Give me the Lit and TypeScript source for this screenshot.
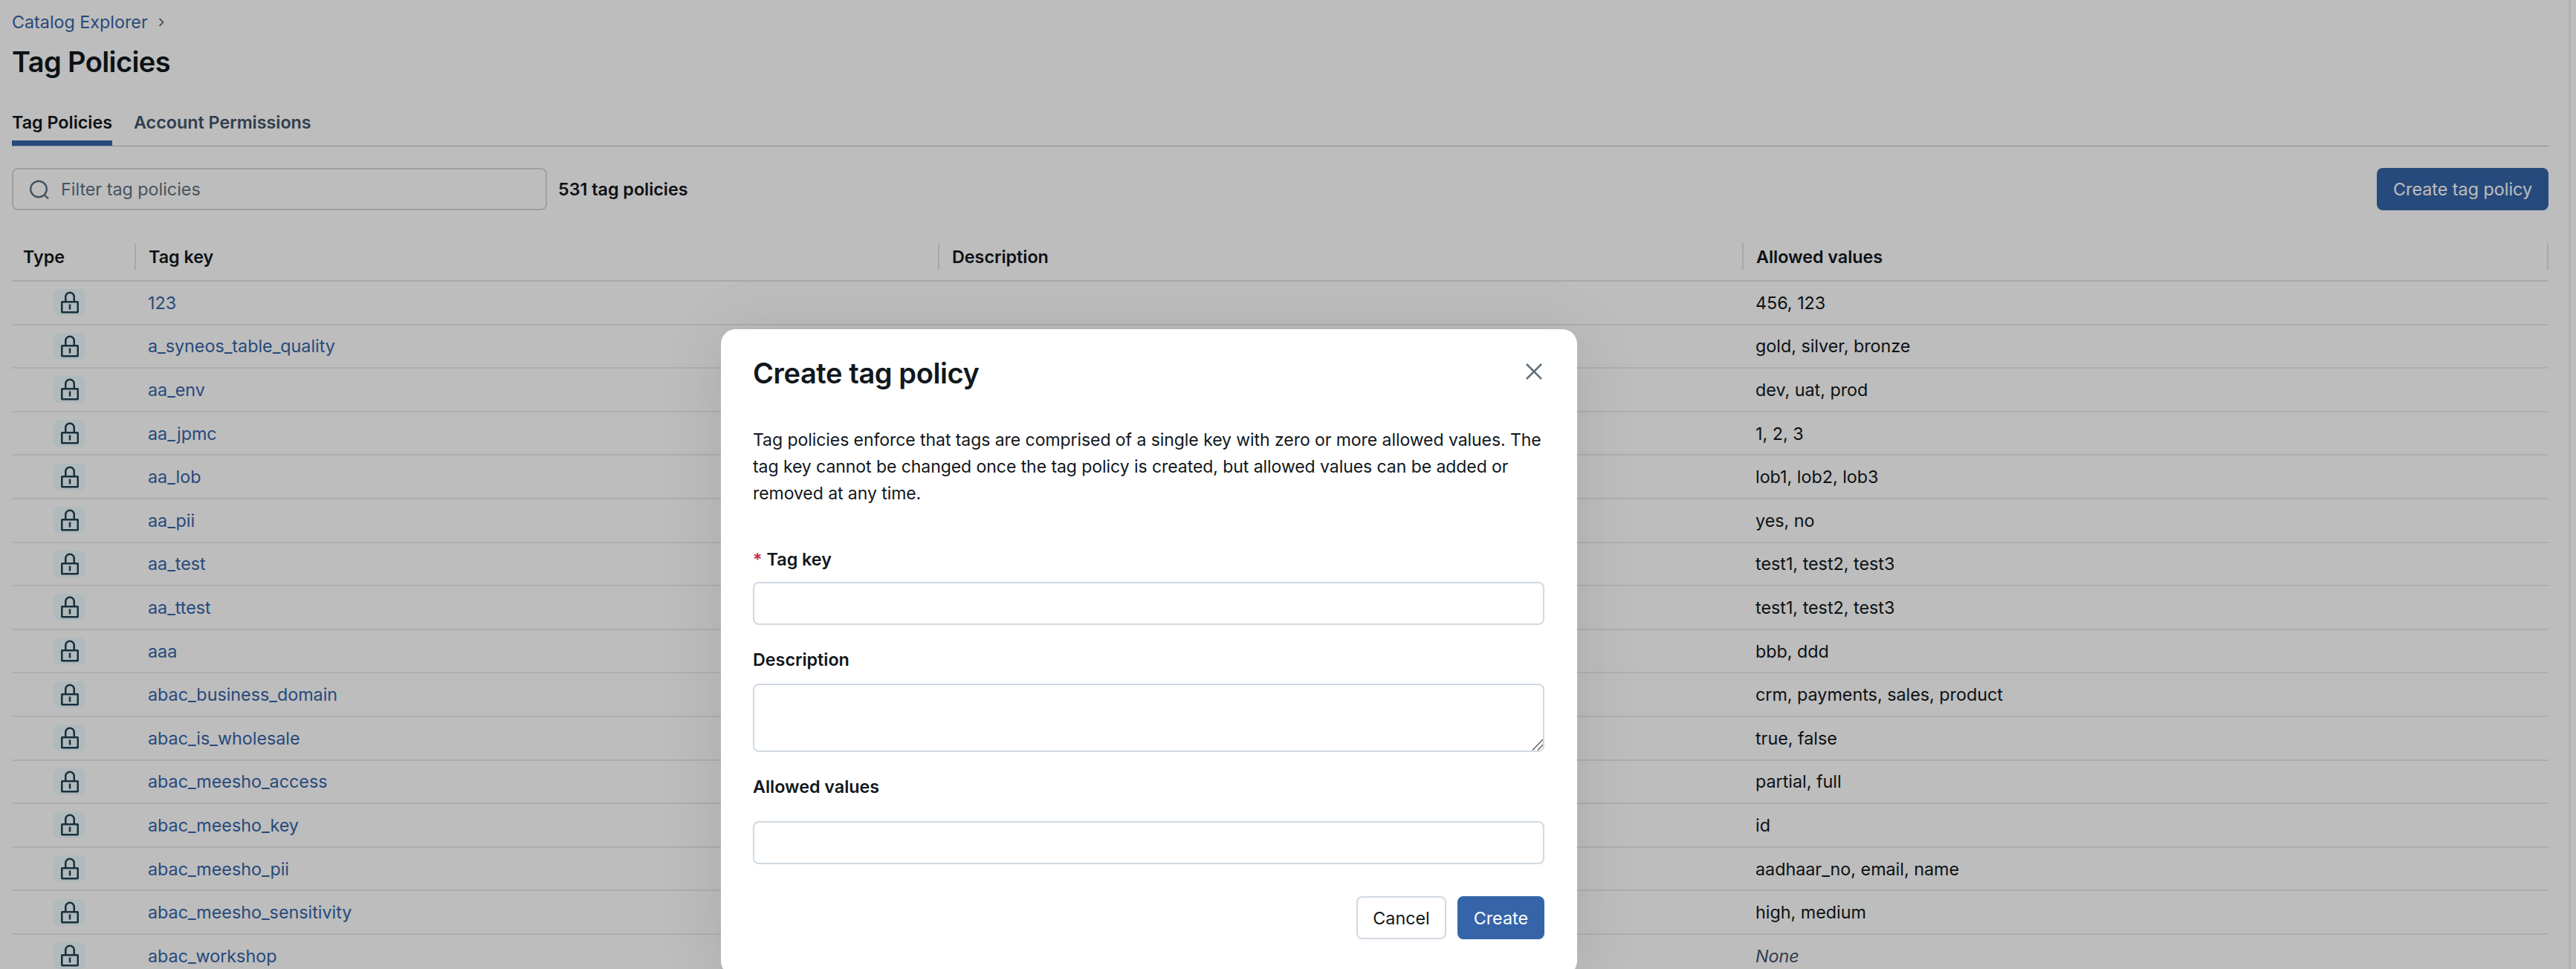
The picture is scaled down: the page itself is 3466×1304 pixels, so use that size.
import { LitElement, css, html } from 'lit'
import { customElement } from 'lit/decorators.js'

type Policy = { key: string; values: string }

const POLICIES: Policy[] = [
  { key: '123', values: '456, 123' },
  { key: 'a_syneos_table_quality', values: 'gold, silver, bronze' },
  { key: 'aa_env', values: 'dev, uat, prod' },
  { key: 'aa_jpmc', values: '1, 2, 3' },
  { key: 'aa_lob', values: 'lob1, lob2, lob3' },
  { key: 'aa_pii', values: 'yes, no' },
  { key: 'aa_test', values: 'test1, test2, test3' },
  { key: 'aa_ttest', values: 'test1, test2, test3' },
  { key: 'aaa', values: 'bbb, ddd' },
  { key: 'abac_business_domain', values: 'crm, payments, sales, product' },
  { key: 'abac_is_wholesale', values: 'true, false' },
  { key: 'abac_meesho_access', values: 'partial, full' },
  { key: 'abac_meesho_key', values: 'id' },
  { key: 'abac_meesho_pii', values: 'aadhaar_no, email, name' },
  { key: 'abac_meesho_sensitivity', values: 'high, medium' },
  { key: 'abac_workshop', values: '' },
]

const lockIcon = html`
  <svg class="lock" viewBox="0 0 24 30" width="24" height="30" aria-hidden="true">
    <path d="M6.25 14V7.5a5.75 5.75 0 0 1 11.5 0V14" fill="none" stroke="currentColor" stroke-width="2.5" />
    <rect x="1.25" y="14.25" width="21.5" height="14" rx="0.5" fill="none" stroke="currentColor" stroke-width="2.5" />
    <path d="M12 17.5v7" fill="none" stroke="currentColor" stroke-width="2.5" />
  </svg>
`

@customElement('app-root')
export class AppRoot extends LitElement {
  render() {
    return html`
      <main class="page">
        <nav class="crumbs">
          <a>Catalog Explorer</a>
          <svg viewBox="0 0 12 16" width="12" height="16" aria-hidden="true">
            <path d="M3.5 3l5 5-5 5" fill="none" stroke="currentColor" stroke-width="1.8" />
          </svg>
        </nav>
        <h1>Tag Policies</h1>
        <div class="tabs">
          <span class="tab active">Tag Policies</span>
          <span class="tab">Account Permissions</span>
        </div>
        <div class="toolbar">
          <div class="search">
            <svg viewBox="0 0 28 28" width="28" height="28" aria-hidden="true">
              <circle cx="13" cy="13.5" r="10.8" fill="none" stroke="currentColor" stroke-width="2.4" />
              <path d="M20.5 21l5.5 5.5" fill="none" stroke="currentColor" stroke-width="2.4" />
            </svg>
            <span>Filter tag policies</span>
          </div>
          <span class="count">531 tag policies</span>
          <button class="primary create">Create tag policy</button>
        </div>
        <div class="table">
          <div class="head">
            <span class="cell">Type</span>
            <span class="cell">Tag key</span>
            <span class="cell">Description</span>
            <span class="cell">Allowed values</span>
          </div>
          ${POLICIES.map(
            (p) => html`
              <div class="row">
                <span class="cell type"><span class="chip">${lockIcon}</span></span>
                <a class="cell">${p.key}</a>
                <span class="cell"></span>
                ${p.values
                  ? html`<span class="cell">${p.values}</span>`
                  : html`<span class="cell none">None</span>`}
              </div>
            `,
          )}
        </div>
      </main>
      <div class="overlay">
        <section class="modal" role="dialog">
          <header>
            <h2>Create tag policy</h2>
            <svg viewBox="0 0 22 22" width="22" height="22" aria-hidden="true">
              <path d="M1 1l20 20M21 1L1 21" fill="none" stroke="#5f7281" stroke-width="2.6" />
            </svg>
          </header>
          <p>
            Tag policies enforce that tags are comprised of a single key with zero or more allowed values. The
            tag key cannot be changed once the tag policy is created, but allowed values can be added or
            removed at any time.
          </p>
          <label class="first"><span class="req">*</span>Tag key</label>
          <div class="input"></div>
          <label>Description</label>
          <div class="area">
            <svg viewBox="0 0 15 16" width="15" height="16" aria-hidden="true">
              <path d="M1 15.5L15 1M8 15.5L15 8" fill="none" stroke="#6b6b6b" stroke-width="1.6" />
            </svg>
          </div>
          <label>Allowed values</label>
          <div class="input values"></div>
          <footer>
            <button class="default">Cancel</button>
            <button class="primary">Create</button>
          </footer>
        </section>
      </div>
    `
  }

  static styles = css`
    :host {
      display: block;
      position: relative;
      height: 1304px;
      overflow: hidden;
      background: #fff;
      color: #11171c;
      font-family: Inter, 'Noto Sans', sans-serif;
      font-size: 23.3px;
    }

    .page {
      box-sizing: border-box;
      width: 3459px;
      height: 1304px;
      padding: 0 27px 0 16px;
      border-right: 3px solid #eeeef3;
    }

    .crumbs {
      display: flex;
      align-items: center;
      gap: 12px;
      height: 29px;
      padding-top: 15px;
      color: #3565a8;
    }

    .crumbs svg {
      color: #5f7281;
    }

    h1 {
      margin: 10px 0 0;
      font-size: 38px;
      line-height: 58px;
      font-weight: 600;
      letter-spacing: -0.6px;
    }

    .tabs {
      display: flex;
      gap: 29px;
      height: 54px;
      margin-top: 30px;
      border-bottom: 1px solid #b5c0d0;
    }

    .tab {
      height: 47px;
      line-height: 46px;
      font-weight: 600;
      color: #44546a;
    }

    .tab.active {
      color: #11171c;
      border-bottom: 7px solid #3565a8;
    }

    .toolbar {
      display: flex;
      align-items: center;
      height: 57px;
      margin-top: 29px;
    }

    .search {
      display: flex;
      align-items: center;
      gap: 15px;
      box-sizing: border-box;
      width: 720px;
      height: 57px;
      padding-left: 21px;
      border: 2px solid #d1d9e1;
      border-radius: 8px;
      color: #5f7281;
    }

    .count {
      margin-left: 15px;
      font-weight: 600;
    }

    button {
      box-sizing: border-box;
      height: 58px;
      padding: 0 22px;
      border-radius: 8px;
      font: inherit;
    }

    .primary {
      border: 0;
      background: #3565a8;
      color: #fff;
    }

    .create {
      height: 57px;
      margin-left: auto;
    }

    .table {
      margin-top: 44px;
    }

    .head,
    .row {
      display: grid;
      grid-template-columns: 167px 1081px 1082px 1083px;
      align-items: center;
    }

    .head {
      align-items: start;
      height: 36px;
      padding-bottom: 14px;
      border-bottom: 2px solid #e0e4e9;
      font-weight: 600;
    }

    .head .cell {
      display: flex;
      align-items: center;
      height: 36px;
      padding-left: 17px;
      border-right: 2px solid #e0e4e9;
    }

    .head .cell:first-child {
      padding-left: 15px;
    }

    .row {
      height: 58.6px;
      box-sizing: border-box;
      border-bottom: 2px solid #e8ebef;
    }

    .cell {
      box-sizing: border-box;
      padding-left: 16px;
      white-space: nowrap;
    }

    a {
      color: #3565a8;
    }

    .row .type {
      padding-left: 56px;
    }

    .chip {
      display: flex;
      align-items: center;
      justify-content: center;
      width: 43px;
      height: 36px;
      border-radius: 8px;
      background: #eefbfe;
      color: #1f4151;
    }

    .none {
      font-style: italic;
      color: #44546a;
    }

    .overlay {
      position: absolute;
      inset: 0;
      background: rgba(0, 0, 0, 0.26);
    }

    .modal {
      position: absolute;
      left: 970px;
      top: 443px;
      box-sizing: border-box;
      width: 1152px;
      height: 870px;
      padding: 0 44px 0 43px;
      border-radius: 20px;
      background: #fff;
      box-shadow: 0 8px 90px rgba(0, 0, 0, 0.1);
    }

    header {
      display: flex;
      align-items: center;
      justify-content: space-between;
      height: 58px;
      margin-top: 30px;
      padding-right: 3px;
    }

    header svg {
      margin-bottom: 4px;
    }

    h2 {
      margin: 0;
      font-size: 38px;
      font-weight: 600;
      letter-spacing: -0.4px;
    }

    .modal p {
      margin: 43px 0 0;
      font-size: 23px;
      line-height: 36px;
      letter-spacing: -0.06px;
    }

    label {
      display: block;
      height: 36px;
      margin-top: 29px;
      line-height: 36px;
      font-weight: 600;
    }

    label.first {
      margin-top: 53px;
    }

    .req {
      margin-right: 6px;
      color: #c4314b;
    }

    .input,
    .area {
      box-sizing: border-box;
      height: 58px;
      margin-top: 12px;
      border: 2px solid #d1d9e1;
      border-radius: 8px;
      background: #fff;
    }

    .area {
      position: relative;
      height: 92px;
      margin-top: 14px;
    }

    .area svg {
      position: absolute;
      right: 0;
      bottom: 0;
    }

    .values {
      margin-top: 28px;
    }

    footer {
      display: flex;
      justify-content: flex-end;
      gap: 15px;
      margin-top: 43px;
    }

    .default {
      padding: 0 20px;
      border: 2px solid #d1d9e1;
      background: #fff;
      color: #11171c;
    }
  `
}
